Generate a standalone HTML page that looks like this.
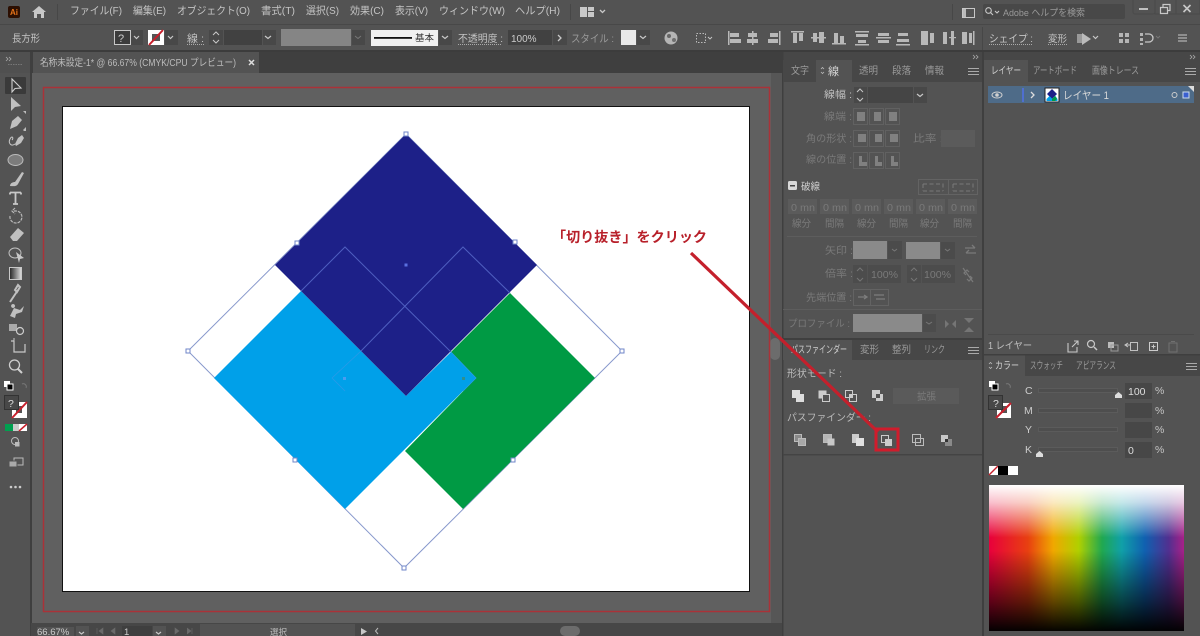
<!DOCTYPE html>
<html><head><meta charset="utf-8"><style>
html,body{margin:0;padding:0;background:#535353;width:1200px;height:636px;overflow:hidden}
svg{display:block;filter:blur(.3px)}
text{font-family:"Liberation Sans","Noto Sans CJK JP",sans-serif;font-size:10px;fill:#c4c4c4}
.m{font-size:10.5px;fill:#c4c4c4}
.d{fill:#7a7a7a}
.t{fill:#9a9a9a}
.ln{stroke:#c8c8c8;fill:none}
.f{fill:#484848}
.h{fill:#fff;stroke:#6f86c8;stroke-width:1}
</style></head><body>
<svg width="1200" height="636" viewBox="0 0 1200 636" xmlns="http://www.w3.org/2000/svg">
<rect width="1200" height="636" fill="#535353"/>
<!-- bars -->
<rect x="0" y="24" width="1200" height="1" fill="#484848"/>
<rect x="0" y="50" width="1200" height="2" fill="#3c3c3c"/>
<rect x="0" y="52" width="783" height="21" fill="#3f3f3f"/>
<rect x="0" y="52" width="31" height="21" fill="#505050"/>
<rect x="783" y="52" width="417" height="8" fill="#474747"/>
<!-- title bar -->
<rect x="8" y="6" width="12" height="12" rx="2" fill="#2c0f02"/>
<text x="10" y="15" style="font-size:8px;font-weight:bold;fill:#e8751a">Ai</text>
<path d="M32 12 L39 6 L46 12 L44 12 L44 18 L41 18 L41 14 L37 14 L37 18 L34 18 L34 12Z" fill="#c8c8c8"/>
<rect x="57" y="4" width="1" height="16" fill="#474747"/>
<text class="m" x="70" y="14" textLength="52">ファイル(F)</text>
<text class="m" x="133" y="14" textLength="33">編集(E)</text>
<text class="m" x="177" y="14" textLength="73">オブジェクト(O)</text>
<text class="m" x="261" y="14" textLength="34">書式(T)</text>
<text class="m" x="306" y="14" textLength="33">選択(S)</text>
<text class="m" x="350" y="14" textLength="34">効果(C)</text>
<text class="m" x="395" y="14" textLength="33">表示(V)</text>
<text class="m" x="439" y="14" textLength="66">ウィンドウ(W)</text>
<text class="m" x="515" y="14" textLength="45">ヘルプ(H)</text>
<rect x="570" y="4" width="1" height="16" fill="#474747"/>
<path d="M580 7h7v10h-7zM588 7h6v4h-6zM588 12h6v5h-6z" fill="#c8c8c8"/>
<path d="M600 10l2.500 2.500 2.500-2.500" class="ln" stroke-width="1.300"/>
<rect x="952" y="4" width="1" height="16" fill="#474747"/>
<rect x="962.500" y="8.500" width="12" height="9" class="ln" stroke="#bbb"/><rect x="963" y="9" width="3" height="8" fill="#bbb"/>
<rect x="983" y="4" width="142" height="15" rx="2" fill="#484848"/>
<circle cx="988.500" cy="10.500" r="2.800" class="ln" stroke-width="1.100"/><path d="M990.500 12.500l2.500 2.500M995 11l2 2 2-2" class="ln" stroke-width="1.100"/>
<text x="1003" y="16" textLength="82" class="t" style="font-size:9.500px">Adobe ヘルプを検索</text>
<rect x="1133" y="-2" width="22" height="16" rx="2" fill="none" stroke="#4a4a4a"/><rect x="1155" y="-2" width="21" height="16" fill="none" stroke="#4a4a4a"/><rect x="1176" y="-2" width="24" height="16" fill="none" stroke="#4a4a4a"/>
<rect x="1139" y="8" width="9" height="2" fill="#c0c0c0"/>
<path d="M1160.500 7.500h7v6h-7zM1163 7V4.500h7v6h-2" class="ln" stroke-width="1.200"/>
<path d="M1183.500 5l7 7M1190.500 5l-7 7" class="ln" stroke-width="1.600"/>

<!-- control bar -->
<text x="12" y="42" style="font-size:10px" textLength="28">長方形</text>
<rect x="114.500" y="30.500" width="16" height="14" fill="#3c3c3c" stroke="#c8c8c8"/>
<text x="118" y="42" style="font-size:11px;fill:#ccc">?</text>
<rect x="131" y="30" width="12" height="15" class="f"/><path d="M134 36l2.500 2.500L139 36" class="ln" stroke-width="1.200"/>
<rect x="148" y="30" width="16" height="15" fill="#fff"/><rect x="152" y="34" width="8" height="7" fill="#555"/><path d="M149 45L163 30" stroke="#c8202c" stroke-width="2"/>
<rect x="165" y="30" width="13" height="15" class="f"/><path d="M168 36l2.500 2.500L173 36" class="ln" stroke-width="1.200"/>
<text x="187" y="42" style="font-size:10.500px" textLength="17">線 :</text><path d="M187 44.500h17" stroke="#aaa" stroke-dasharray="1 1"/>
<rect x="209" y="30" width="14" height="15" class="f"/><path d="M213 35l3-3 3 3M213 40l3 3 3-3" class="ln"/>
<rect x="224" y="30" width="38" height="15" fill="#414141"/>
<rect x="263" y="30" width="13" height="15" class="f"/><path d="M265 36l3 2.500L271 36" class="ln" stroke-width="1.200"/>
<rect x="281" y="29" width="70" height="17" fill="#858585"/>
<rect x="352" y="30" width="13" height="15" class="f"/><path d="M355 36l3 2.500 3-2.500" stroke="#777" fill="none"/>
<rect x="371" y="30" width="67" height="16" fill="#f0f0f0"/><rect x="374" y="37" width="38" height="1.800" fill="#111"/>
<text x="415" y="41" style="font-size:9px;fill:#333" textLength="19">基本</text>
<rect x="439" y="30" width="13" height="15" class="f"/><path d="M442 36l3 2.500 3-2.500" class="ln" stroke-width="1.200"/>
<text x="458" y="42" style="font-size:10px" textLength="45">不透明度 :</text><path d="M458 44.500h44" stroke="#aaa" stroke-dasharray="1 1"/>
<rect x="508" y="30" width="44" height="15" fill="#414141"/>
<text x="511" y="42" style="font-size:10px;fill:#ccc">100%</text>
<rect x="553" y="30" width="14" height="15" class="f"/><path d="M558 35l3 3-3 3" class="ln" stroke-width="1.300"/>
<text x="571" y="42" class="t" textLength="43" style="font-size:10.500px">スタイル :</text>
<rect x="621" y="30" width="15" height="15" fill="#e8e8e8"/>
<rect x="637" y="30" width="13" height="15" class="f"/><path d="M640 36l3 2.500 3-2.500" class="ln" stroke-width="1.200"/>
<circle cx="671" cy="38" r="6.500" fill="#b5b5b5"/><circle cx="669" cy="36" r="2" fill="#666"/><circle cx="674" cy="40" r="2" fill="#6f6f6f"/>
<rect x="696.500" y="33.500" width="9" height="9" fill="none" stroke="#bbb" stroke-dasharray="1.500 1.500"/><path d="M708 37l2 2 2-2" class="ln" stroke-width=".9"/>
<g fill="#b8b8b8">
<rect x="728" y="31" width="1.500" height="14"/><rect x="730" y="33" width="9" height="4"/><rect x="730" y="39" width="11" height="4"/>
<rect x="752" y="31" width="1.500" height="14"/><rect x="748" y="33" width="9" height="4"/><rect x="747" y="39" width="11" height="4"/>
<rect x="779" y="31" width="1.500" height="14"/><rect x="770" y="33" width="8" height="4"/><rect x="768" y="39" width="10" height="4"/>
<rect x="791" y="31" width="13" height="1.500"/><rect x="793" y="33" width="4" height="10"/><rect x="799" y="33" width="4" height="8"/>
<rect x="811" y="37" width="15" height="1.500"/><rect x="813" y="33" width="4" height="9"/><rect x="819" y="32" width="5" height="11"/>
<rect x="832" y="43" width="14" height="1.500"/><rect x="834" y="33" width="4" height="10"/><rect x="840" y="36" width="4" height="7"/>
<rect x="855" y="31" width="14" height="1.500"/><rect x="856" y="34" width="12" height="3"/><rect x="858" y="40" width="8" height="3"/><rect x="855" y="44" width="14" height="1.500"/>
<rect x="876" y="37" width="15" height="1.500"/><rect x="878" y="33" width="11" height="3"/><rect x="878" y="40" width="11" height="3"/>
<rect x="896" y="44" width="14" height="1.500"/><rect x="898" y="33" width="10" height="3"/><rect x="897" y="39" width="12" height="3"/>
<rect x="921" y="31" width="7" height="14"/><rect x="930" y="33" width="4" height="10"/>
<rect x="943" y="32" width="4" height="12"/><rect x="951" y="31" width="3" height="14"/><rect x="949" y="37" width="7" height="1.200"/>
<rect x="962" y="32" width="5" height="12"/><rect x="969" y="33" width="3" height="10"/><rect x="973" y="31" width="1.500" height="14"/>
</g>
<rect x="982" y="27" width="1" height="23" fill="#474747"/>
<text x="989" y="42" textLength="44" style="font-size:10.500px">シェイプ :</text><path d="M989 44.500h44" stroke="#aaa" stroke-dasharray="1 1"/>
<text x="1048" y="42" textLength="19" style="font-size:9.500px">変形</text><path d="M1048 44.500h19" stroke="#aaa" stroke-dasharray="1 1"/>
<path d="M1077 34h7v9h-7z" fill="#999"/><path d="M1082 33l9 6-9 6z" fill="#bbb"/>
<path d="M1093 36l2.500 2.500 2.500-2.500" class="ln" stroke-width="1.200"/>
<path d="M1119 33h4v4h-4zM1125 33h4v4h-4zM1119 39h4v4h-4zM1125 39h4v4h-4z" fill="#b5b5b5"/>
<path d="M1140 33h3v3h-3zM1140 38h3v3h-3zM1140 43h3v2h-3z" fill="#b5b5b5"/><path d="M1145 34h4a4 4 0 0 1 0 8h-4" class="ln" stroke-width="1.300"/>
<path d="M1156 36l2 2 2-2" stroke="#777" fill="none"/>
<path d="M1178 35h9M1178 38h9M1178 41h9" class="ln"/>

<!-- document tab -->
<rect x="33" y="52" width="226" height="21" fill="#535353"/>
<text x="40" y="66" textLength="196" style="font-size:10px;fill:#bcbcbc">名称未設定-1* @ 66.67% (CMYK/CPU プレビュー)</text>
<path d="M249 60l5 5M254 60l-5 5" stroke="#ddd" stroke-width="1.500"/>

<!-- canvas -->
<rect x="31" y="73" width="752" height="563" fill="#606060"/>
<rect x="0" y="73" width="31" height="563" fill="#535353"/>
<rect x="30" y="52" width="2" height="584" fill="#3f3f3f"/>
<rect x="771" y="73" width="12" height="550" fill="#565656"/>
<rect x="770" y="338" width="10" height="22" rx="5" fill="#6c6c6c"/>
<rect x="43.500" y="87.500" width="726" height="524" fill="none" stroke="#aa3238" stroke-width="1.500"/>
<rect x="62.500" y="106.500" width="687" height="485" fill="#fff" stroke="#111" stroke-width="1"/>

<!-- art -->
<path d="M406 134L622 351L404 568L188 351Z" fill="#fff" stroke="#8798cc" stroke-width="1"/>
<path d="M510 293L595 378L463 509L405 451L476 378L451 352Z" fill="#009a44"/>
<path d="M301 291L214 378L345 509L476 378L451 352L406 396Z" fill="#00a0e9"/>
<path d="M406 134L537 265L406 396L275 265Z" fill="#1d2088"/>
<path d="M301 291L345 247L451 352M510 293L463 247L361 351" fill="none" stroke="#4f5fc0" stroke-width="1"/>
<path d="M361 351L332 378M451 352L476 378L463 391M332 378L345 391" fill="none" stroke="#2a9ae8" stroke-width=".8"/>
<g>
<rect x="404" y="132" width="4" height="4" class="h"/><rect x="295" y="241" width="4" height="4" class="h"/><rect x="513" y="240" width="4" height="4" class="h"/>
<rect x="186" y="349" width="4" height="4" class="h"/><rect x="620" y="349" width="4" height="4" class="h"/><rect x="293" y="458" width="4" height="4" class="h"/>
<rect x="511" y="458" width="4" height="4" class="h"/><rect x="402" y="566" width="4" height="4" class="h"/>
</g>
<rect x="404.500" y="263.500" width="3" height="3" fill="#5a70e0"/>
<rect x="343" y="377" width="3" height="3" fill="#4a9cf0"/><rect x="462" y="377" width="3" height="3" fill="#2f8f8f"/>

<!-- toolbar -->
<rect x="0" y="73" width="30" height="563" fill="#535353"/>
<path d="M6 57l2 2-2 2M9 57l2 2-2 2" stroke="#aaa" fill="none" stroke-width=".8"/>
<path d="M8 64.500h14" stroke="#777" stroke-dasharray="1.500 1"/>
<rect x="5" y="77" width="21" height="17" rx="1" fill="#3a3a3a"/>
<path d="M12 79L12 92L15 88.500L21 88Z" fill="none" stroke="#d0d0d0" stroke-width="1.100"/>
<path d="M11 97L11 111L15 107L21 106Z" fill="#c0c0c0"/><path d="M23 111h3v3z M23 130h3v-3z" fill="#bbb"/>
<path d="M10 129L12 121L18 116L22 120L17 126Z" fill="#c0c0c0"/><path d="M23 131l3-3v3z" fill="#bbb"/>
<path d="M15 144L18 138L22 135L24 138L21 143L16 146Z" fill="#c0c0c0"/><path d="M15 144c-4 3-7-1-5-5s4-1 2 1" class="ln"/>
<ellipse cx="15.500" cy="160" rx="7.500" ry="5.500" fill="#7c7c7c" stroke="#bbb"/>
<path d="M10 186c0-3 3-4 5-4L22 172l2 1-6 11c-2 3-5 2-8 2z" fill="#c0c0c0"/>
<path d="M10 192.500h11M15.500 193v11M13 204h5M10 192.500v2M21 192.500v2" stroke="#c8c8c8" stroke-width="1.800" fill="none"/>
<path d="M10 216a6 6 0 1 0 6-5h-3M15 208l-3 3 3 3" fill="none" stroke="#b8b8b8" stroke-width="1.200" stroke-dasharray="3 1"/>
<path d="M10 237L18 228L24 233L17 241H13Z" fill="#c0c0c0"/>
<ellipse cx="15" cy="253" rx="6" ry="5" fill="none" stroke="#c0c0c0"/><path d="M16 252L24 258L20 259L19 263Z" fill="#c8c8c8"/>
<defs><linearGradient id="g1"><stop offset="0" stop-color="#222"/><stop offset="1" stop-color="#e0e0e0"/></linearGradient>
<linearGradient id="sx"><stop offset="0" stop-color="#e8003c"/><stop offset=".2" stop-color="#e84010"/><stop offset=".33" stop-color="#f0a800"/><stop offset=".46" stop-color="#b0d000"/><stop offset=".58" stop-color="#20a850"/><stop offset=".68" stop-color="#10a0a8"/><stop offset=".8" stop-color="#1060b0"/><stop offset=".92" stop-color="#503090"/><stop offset="1" stop-color="#a82088"/></linearGradient>
<linearGradient id="sy" x1="0" x2="0" y1="0" y2="1"><stop offset="0" stop-color="#fff"/><stop offset=".12" stop-color="#fff" stop-opacity=".75"/><stop offset=".36" stop-color="#fff" stop-opacity="0"/><stop offset=".45" stop-color="#000" stop-opacity="0"/><stop offset=".8" stop-color="#000" stop-opacity=".6"/><stop offset="1" stop-color="#000" stop-opacity=".98"/></linearGradient></defs>
<rect x="9.500" y="267.500" width="12" height="12" fill="url(#g1)" stroke="#c8c8c8"/>
<path d="M10 302L18 290M18 285l2 2-3 5-2-2z" stroke="#c0c0c0" stroke-width="2" fill="none"/>
<path d="M10 316l4-8 6 2 4-4-2 6-6 2-1 4zM13 304a2 2 0 1 0 .1 0" fill="#c0c0c0"/>
<rect x="9" y="324" width="8" height="7" fill="#aaa"/><circle cx="20" cy="331" r="3.500" fill="none" stroke="#ccc" stroke-width="1.200"/>
<path d="M11 341h3M14 341v11h11v-8" fill="none" stroke="#c8c8c8" stroke-width="1.200"/><path d="M14 338v3" stroke="#c8c8c8"/>
<circle cx="14.500" cy="365" r="5" fill="none" stroke="#cfcfcf" stroke-width="1.300"/><path d="M18 369l4 4" stroke="#cfcfcf" stroke-width="2"/>
<rect x="4" y="381" width="6" height="6" fill="#fff"/><rect x="7" y="384" width="6" height="6" fill="#000" stroke="#fff"/>
<path d="M22 384a3 3 0 0 1 4 4" stroke="#777" fill="none"/>
<rect x="12" y="402" width="15" height="16" fill="#fff"/><rect x="16" y="406" width="6" height="7" fill="#555"/><path d="M12 418L27 402" stroke="#c8202c" stroke-width="2"/>
<rect x="4.500" y="395.500" width="14" height="14" fill="#484848" stroke="#333"/>
<text x="8" y="407" style="font-size:10.500px;fill:#ddd">?</text>
<rect x="5" y="424" width="8" height="7" fill="#00a050"/><rect x="13" y="424" width="6" height="7" fill="#ccc"/><rect x="19" y="424" width="8" height="7" fill="#fff"/><path d="M19 431l8-7" stroke="#c8202c" stroke-width="1.500"/>
<circle cx="15" cy="441" r="3.500" fill="none" stroke="#bbb"/><rect x="15" y="442" width="4.500" height="4.500" fill="#bbb"/>
<rect x="14" y="458" width="9" height="7" fill="none" stroke="#bbb"/><rect x="9" y="461" width="8" height="6" fill="#aaa" stroke="#535353"/>
<circle cx="11" cy="487" r="1.300" fill="#ccc"/><circle cx="15.500" cy="487" r="1.300" fill="#ccc"/><circle cx="20" cy="487" r="1.300" fill="#ccc"/>

<!-- status bar -->
<rect x="31" y="623" width="752" height="13" fill="#474747"/>
<rect x="37" y="627" width="37" height="9" fill="#535353"/>
<text x="37" y="635" style="font-size:9.500px;fill:#ccc">66.67%</text>
<rect x="76" y="626" width="13" height="10" fill="#535353"/><path d="M79 632l2.500 2 2.500-2" class="ln" stroke-width="1.200"/>
<path d="M97 628v6M103 628l-4 3 4 3zM115 628l-4 3 4 3z" fill="#6a6a6a" stroke="#6a6a6a" stroke-width=".6"/>
<rect x="122" y="626" width="30" height="10" fill="#3f3f3f"/>
<text x="124" y="635" style="font-size:9.500px;fill:#ccc">1</text>
<rect x="153" y="626" width="13" height="10" fill="#535353"/><path d="M156 632l2.500 2 2.500-2" class="ln" stroke-width="1.200"/>
<path d="M175 628l4 3-4 3zM187 628l4 3-4 3M192 628v6z" fill="#6a6a6a" stroke="#6a6a6a" stroke-width=".6"/>
<rect x="200" y="624" width="155" height="12" fill="#535353"/>
<text x="270" y="635" style="font-size:8.500px;fill:#bbb">選択</text>
<path d="M361 628l6 3.500-6 3.500z" fill="#c8c8c8"/>
<path d="M378 628l-2.500 3 2.500 3" stroke="#bbb" fill="none"/>
<rect x="560" y="626" width="20" height="10" rx="5" fill="#6c6c6c"/>

<!-- panel column -->
<rect x="783" y="60" width="199" height="278" fill="#535353"/>
<rect x="982" y="52" width="2" height="584" fill="#3f3f3f"/>
<rect x="782" y="52" width="1.500" height="584" fill="#3f3f3f"/>
<path d="M973 55l2 2-2 2M976 55l2 2-2 2M1190 55l2 2-2 2M1193 55l2 2-2 2" stroke="#aaa" fill="none" stroke-width=".8"/>
<rect x="783" y="60" width="199" height="22" fill="#474747"/>
<rect x="816" y="60" width="36" height="22" fill="#535353"/>
<text x="791" y="74" textLength="18" class="t">文字</text>
<path d="M821 69l1.500-1.500 1.500 1.500M821 72l1.500 1.500 1.500-1.500" stroke="#bbb" fill="none" stroke-width=".8"/>
<text x="828" y="75" style="font-size:11px;fill:#d8d8d8">線</text>
<text x="859" y="74" textLength="19" class="t">透明</text>
<text x="892" y="74" textLength="19" class="t">段落</text>
<text x="925" y="74" textLength="19" class="t">情報</text>
<path d="M968 68.500h11M968 71.500h11M968 74.500h11" stroke="#aaa"/>

<text x="824" y="98" textLength="28" style="fill:#c0c0c0">線幅 :</text>
<rect x="854" y="87" width="13" height="16" class="f"/><path d="M857 92l3-3 3 3M857 98l3 3 3-3" class="ln"/>
<rect x="868" y="87" width="45" height="16" fill="#454545"/>
<rect x="914" y="87" width="13" height="16" class="f"/><path d="M917 94l3 2.500 3-2.500" class="ln" stroke-width="1.200"/>
<text x="824" y="120" textLength="28" class="d">線端 :</text>
<text x="806" y="142" textLength="46" class="d">角の形状 :</text>
<text x="806" y="163" textLength="46" class="d">線の位置 :</text>
<g fill="none" stroke="#616161"><rect x="853.500" y="108.500" width="14" height="16"/><rect x="869.500" y="108.500" width="14" height="16"/><rect x="885.500" y="108.500" width="14" height="16"/>
<rect x="853.500" y="130.500" width="14" height="16"/><rect x="869.500" y="130.500" width="14" height="16"/><rect x="885.500" y="130.500" width="14" height="16"/>
<rect x="853.500" y="152.500" width="14" height="16"/><rect x="869.500" y="152.500" width="14" height="16"/><rect x="885.500" y="152.500" width="14" height="16"/></g>
<g fill="#808080">
<rect x="857" y="112" width="8" height="9"/><rect x="874" y="112" width="7" height="9"/><rect x="889" y="112" width="8" height="9"/>
<rect x="858" y="134" width="8" height="8"/><rect x="875" y="134" width="7" height="8"/><rect x="890" y="134" width="8" height="8"/>
<rect x="859" y="156" width="3" height="10"/><rect x="862" y="162" width="5" height="4"/><rect x="875" y="156" width="3" height="10"/><rect x="878" y="162" width="4" height="4"/><rect x="891" y="156" width="3" height="10"/><rect x="894" y="162" width="4" height="4"/>
</g>
<text x="913" y="142" textLength="30" class="d">比率 :</text>
<rect x="941" y="130" width="34" height="17" fill="#5b5b5b"/>
<rect x="788" y="181" width="9" height="9" rx="1.500" fill="#d8d8d8"/><rect x="790" y="185" width="5" height="1.500" fill="#444"/>
<text x="801" y="190" textLength="19" style="fill:#d0d0d0">破線</text>
<rect x="918.500" y="179.500" width="30" height="15" fill="none" stroke="#636363"/><rect x="948.500" y="179.500" width="29" height="15" fill="none" stroke="#636363"/>
<path d="M923 184h20v7M923 184v7M923 191h20" fill="none" stroke="#7a7a7a" stroke-dasharray="4 2.500"/>
<path d="M953 184h20v7M953 184v7M953 191h20" fill="none" stroke="#7a7a7a" stroke-dasharray="4 2.500"/>
<g fill="#5b5b5b">
<rect x="788" y="199" width="29" height="15"/><rect x="820" y="199" width="29" height="15"/><rect x="852" y="199" width="29" height="15"/><rect x="884" y="199" width="29" height="15"/><rect x="916" y="199" width="29" height="15"/><rect x="948" y="199" width="29" height="15"/>
</g>
<text class="d" x="791" y="211" textLength="24">0 mn</text><text class="d" x="823" y="211" textLength="24">0 mn</text><text class="d" x="855" y="211" textLength="24">0 mn</text><text class="d" x="887" y="211" textLength="24">0 mn</text><text class="d" x="919" y="211" textLength="24">0 mn</text><text class="d" x="951" y="211" textLength="24">0 mn</text>
<text class="d" x="792" y="227" textLength="19">線分</text><text class="d" x="825" y="227" textLength="19">間隔</text><text class="d" x="857" y="227" textLength="19">線分</text><text class="d" x="889" y="227" textLength="19">間隔</text><text class="d" x="920" y="227" textLength="19">線分</text><text class="d" x="953" y="227" textLength="19">間隔</text>
<rect x="787" y="236" width="190" height="1" fill="#5d5d5d"/>
<text x="825" y="254" textLength="28" class="d">矢印 :</text>
<rect x="853" y="241" width="34" height="18" fill="#8a8a8a"/><rect x="888" y="241" width="14" height="18" fill="#4b4b4b"/><path d="M892 249l2.500 2 2.500-2" stroke="#777" fill="none"/>
<rect x="906" y="242" width="34" height="17" fill="#8a8a8a"/><rect x="941" y="242" width="14" height="17" fill="#4b4b4b"/><path d="M945 249l2.500 2 2.500-2" stroke="#777" fill="none"/>
<path d="M965 248h10M972 245l3 3M976 253h-10M969 250l-3 3" stroke="#7a7a7a" fill="none" stroke-width="1.300"/>
<text x="825" y="277" textLength="28" class="d">倍率 :</text>
<rect x="853" y="265" width="14" height="18" fill="#4c4c4c"/><rect x="868" y="265" width="33" height="18" fill="#4c4c4c"/><path d="M857 271l3-3 3 3M857 278l3 3 3-3" stroke="#757575" fill="none"/>
<text class="d" x="871" y="278" textLength="27" style="font-size:10px">100%</text>
<rect x="907" y="265" width="14" height="18" fill="#4c4c4c"/><rect x="922" y="265" width="33" height="18" fill="#4c4c4c"/><path d="M911 271l3-3 3 3M911 278l3 3 3-3" stroke="#757575" fill="none"/>
<text class="d" x="924" y="278" textLength="27" style="font-size:10px">100%</text>
<path d="M963 268l5 7 5 7M966 275l-2-2 3-3 2 2M970 276l2 2-3 3-2-2" stroke="#7a7a7a" fill="none" stroke-width="1.200"/>
<text x="806" y="301" textLength="46" class="d">先端位置 :</text>
<rect x="853.500" y="289.500" width="17" height="16" fill="none" stroke="#636363"/><rect x="870.500" y="289.500" width="18" height="16" fill="none" stroke="#636363"/>
<path d="M858 297h9M864 295l3 2-3 2M874 295h10M876 299h9" stroke="#7d7d7d" fill="none" stroke-width="1.300"/>
<rect x="783" y="309" width="199" height="1" fill="#5d5d5d"/>
<text x="788" y="327" textLength="62" class="d">プロファイル :</text>
<rect x="853" y="314" width="69" height="18" fill="#8a8a8a"/><rect x="923" y="314" width="13" height="18" fill="#4c4c4c"/><path d="M926 322l3 2 3-2" stroke="#777" fill="none"/>
<path d="M945 320v8l4-4zM956 320v8l-4-4zM950.500 318v1" fill="#757575"/>
<path d="M964 318h10l-5 5zM964 332h10l-5-5z" fill="#757575"/>

<!-- pathfinder -->
<rect x="783" y="338" width="199" height="2" fill="#3f3f3f"/>
<rect x="783" y="340" width="199" height="20" fill="#474747"/>
<rect x="783" y="340" width="69" height="20" fill="#535353"/>
<text x="791" y="353" textLength="56" style="fill:#d0d0d0;font-size:10px">パスファインダー</text>
<text x="860" y="353" textLength="19" class="t">変形</text>
<text x="892" y="353" textLength="19" class="t">整列</text>
<text x="924" y="353" textLength="21" class="t">リンク</text>
<path d="M968 347.500h11M968 350.500h11M968 353.500h11" stroke="#aaa"/>
<text x="787" y="377" textLength="55" style="fill:#bbb">形状モード :</text>
<text x="787" y="421" textLength="84" style="fill:#bbb">パスファインダー :</text>
<g>
<rect x="792" y="390" width="8" height="8" fill="#ddd"/><rect x="796" y="394" width="8" height="8" fill="#ddd"/>
<rect x="818.500" y="390.500" width="8" height="8" fill="#ccc"/><rect x="822.500" y="394.500" width="7" height="7" fill="#535353" stroke="#ccc"/>
<rect x="845.500" y="390.500" width="7" height="7" fill="none" stroke="#ccc"/><rect x="849.500" y="394.500" width="7" height="7" fill="none" stroke="#ccc"/><rect x="849.500" y="394.500" width="3" height="3" fill="#ccc"/>
<rect x="872" y="390" width="8" height="8" fill="#ccc"/><rect x="876" y="394" width="7" height="7" fill="#ccc"/><rect x="876" y="394" width="4" height="4" fill="#535353"/>
</g>
<rect x="893" y="388" width="66" height="16" fill="#5a5a5a"/>
<text x="917" y="400" textLength="19" class="d">拡張</text>
<g>
<rect x="794.500" y="434.500" width="7" height="7" fill="#8a8a8a" stroke="#bbb"/><rect x="798.500" y="438.500" width="7" height="7" fill="#a8a8a8" stroke="#bbb"/>
<rect x="823.500" y="434.500" width="8" height="8" fill="#b5b5b5" stroke="#bbb"/><rect x="827.500" y="438.500" width="7" height="7" fill="#c8c8c8"/>
<rect x="852" y="434" width="7" height="9" fill="#ccc"/><rect x="856" y="438" width="8" height="8" fill="#e0e0e0"/>
<rect x="881.500" y="435.500" width="7" height="7" fill="none" stroke="#ccc"/><rect x="885.500" y="439.500" width="6" height="6" fill="#ccc" stroke="#ccc"/>
<rect x="912.500" y="434.500" width="8" height="8" fill="none" stroke="#bbb"/><rect x="915.500" y="438.500" width="8" height="7" fill="none" stroke="#bbb"/>
<rect x="941" y="435" width="7" height="7" fill="#c8c8c8"/><rect x="945" y="439" width="7" height="7" fill="#8a8a8a"/><rect x="945" y="439" width="3" height="3" fill="#333"/>
</g>
<rect x="783" y="454" width="199" height="1.500" fill="#444"/>

<!-- right panels -->
<rect x="984" y="60" width="216" height="22" fill="#474747"/>
<rect x="984" y="60" width="44" height="22" fill="#535353"/>
<text x="991" y="74" textLength="30" style="fill:#d0d0d0">レイヤー</text>
<text x="1033" y="74" textLength="44" class="t">アートボード</text>
<text x="1092" y="74" textLength="47" class="t">画像トレース</text>
<path d="M1185 68.500h11M1185 71.500h11M1185 74.500h11" stroke="#aaa"/>
<rect x="988" y="86" width="206" height="17" fill="#4e6b88"/>
<ellipse cx="997" cy="95" rx="5" ry="3" fill="none" stroke="#d0d0d0"/><circle cx="997" cy="95" r="1.800" fill="#d0d0d0"/>
<rect x="1022" y="88" width="2" height="14" fill="#4f6fd0"/>
<path d="M1031 92l3 3-3 3" stroke="#ddd" fill="none" stroke-width="1.300"/>
<rect x="1045" y="88" width="14" height="14" fill="#fff" stroke="#222"/>
<path d="M1052 89l5 5-5 5-5-5z" fill="#1d2088"/><path d="M1046.500 99l3-3 3 3 3-3 2 3v2h-11z" fill="#00a0e9"/><path d="M1052 99l3-3 2 3-2 2h-3z" fill="#009a44"/>
<text x="1063" y="99" textLength="46" style="font-size:11px;fill:#d8d8d8">レイヤー 1</text>
<circle cx="1174.500" cy="95" r="2.500" fill="none" stroke="#ccc"/>
<rect x="1183" y="92" width="6" height="6" fill="#3a60d0" stroke="#cde"/>
<path d="M1188 86h6v6z" fill="#ddd"/>
<rect x="988" y="334" width="206" height="1" fill="#4a4a4a"/>
<text x="988" y="349" textLength="44" style="fill:#c0c0c0">1 レイヤー</text>
<path d="M1068 343v9h9v-5M1072 347l6-6M1074 341h4v4" class="ln" stroke-width="1.100"/>
<circle cx="1091" cy="344" r="3.500" class="ln" stroke-width="1.200"/><path d="M1094 347l3 3" class="ln" stroke-width="1.500"/>
<rect x="1108" y="342" width="6" height="6" fill="#bbb"/><rect x="1111" y="345" width="7" height="6" fill="none" stroke="#999"/>
<path d="M1126 345h5M1128 343l-3 2 3 2" class="ln"/><rect x="1130.500" y="342.500" width="7" height="8" fill="none" stroke="#c0c0c0"/>
<rect x="1149.500" y="342.500" width="8" height="8" fill="none" stroke="#ccc"/><path d="M1153.500 344.500v4M1151.500 346.500h4" class="ln"/>
<path d="M1169 343h8v9h-8zM1171 341.500h4" stroke="#707070" fill="none"/>
<rect x="984" y="354" width="216" height="1.500" fill="#3f3f3f"/>
<rect x="984" y="355.500" width="216" height="20.500" fill="#474747"/>
<rect x="984" y="355.500" width="41" height="20.500" fill="#535353"/>
<path d="M989 364l1.500-1.500 1.500 1.500M989 367l1.500 1.500 1.500-1.500" stroke="#bbb" fill="none" stroke-width=".8"/>
<text x="995" y="369" textLength="24" style="fill:#d0d0d0">カラー</text>
<text x="1030" y="369" textLength="33" class="t">スウォッチ</text>
<text x="1076" y="369" textLength="40" class="t">アピアランス</text>
<path d="M1186 363.500h11M1186 366.500h11M1186 369.500h11" stroke="#aaa"/>
<rect x="989" y="381" width="6" height="6" fill="#fff"/><rect x="992" y="384" width="6" height="6" fill="#000" stroke="#fff"/>
<path d="M1006 384a3 3 0 0 1 4 4" stroke="#777" fill="none"/>
<rect x="997" y="403" width="14" height="15" fill="#fff"/><rect x="1001" y="406" width="6" height="7" fill="#555"/><path d="M996 418L1011 403" stroke="#c8202c" stroke-width="2"/>
<rect x="988.500" y="395.500" width="14" height="14" fill="#484848" stroke="#333"/>
<text x="993" y="407" style="font-size:10.500px;fill:#ddd">?</text>
<text x="1025" y="394" style="fill:#ccc;font-size:10.500px">C</text><text x="1024" y="414" style="fill:#ccc;font-size:10.500px">M</text><text x="1025" y="433" style="fill:#ccc;font-size:10.500px">Y</text><text x="1025" y="453" style="fill:#ccc;font-size:10.500px">K</text>
<g fill="#4e4e4e" stroke="#5b5b5b"><rect x="1038.500" y="388.500" width="79" height="4"/><rect x="1038.500" y="408.500" width="79" height="4"/><rect x="1038.500" y="427.500" width="79" height="4"/><rect x="1038.500" y="447.500" width="79" height="4"/></g>
<path d="M1115 398v-3l3.500-3 3.500 3v3zM1036 457v-3l3.500-3 3.500 3v3z" fill="#ddd"/>
<g fill="#474747"><rect x="1125" y="383" width="27" height="16"/><rect x="1125" y="403" width="27" height="15"/><rect x="1125" y="422" width="27" height="16"/><rect x="1125" y="442" width="27" height="16"/></g>
<text x="1128" y="395" style="font-size:10.500px;fill:#ddd">100</text><text x="1128" y="454" style="font-size:10.500px;fill:#ddd">0</text>
<text x="1155" y="394" style="font-size:10.500px">%</text><text x="1155" y="414" style="font-size:10.500px">%</text><text x="1155" y="433" style="font-size:10.500px">%</text><text x="1155" y="453" style="font-size:10.500px">%</text>
<rect x="989" y="466" width="9" height="9" fill="#fff"/><path d="M989 475l9-9" stroke="#c8202c" stroke-width="1.400"/>
<rect x="998" y="466" width="10" height="9" fill="#000"/><rect x="1008" y="466" width="10" height="9" fill="#fff"/>
<rect x="989" y="485" width="195" height="146" fill="url(#sx)"/>
<rect x="989" y="485" width="195" height="146" fill="url(#sy)"/>

<!-- annotation -->
<text x="552" y="242" textLength="155" style="font-size:14px;font-weight:bold;fill:#b8202a">「切り抜き」をクリック</text>
<path d="M691 253L878 432" stroke="#c4202c" stroke-width="3.200" fill="none"/>
<rect x="876" y="429" width="22" height="21" fill="none" stroke="#d01c2c" stroke-width="3"/>
</svg>
<script>document.querySelectorAll('text[textLength]').forEach(function(t){t.setAttribute('lengthAdjust','spacingAndGlyphs')});</script>
</body></html>
